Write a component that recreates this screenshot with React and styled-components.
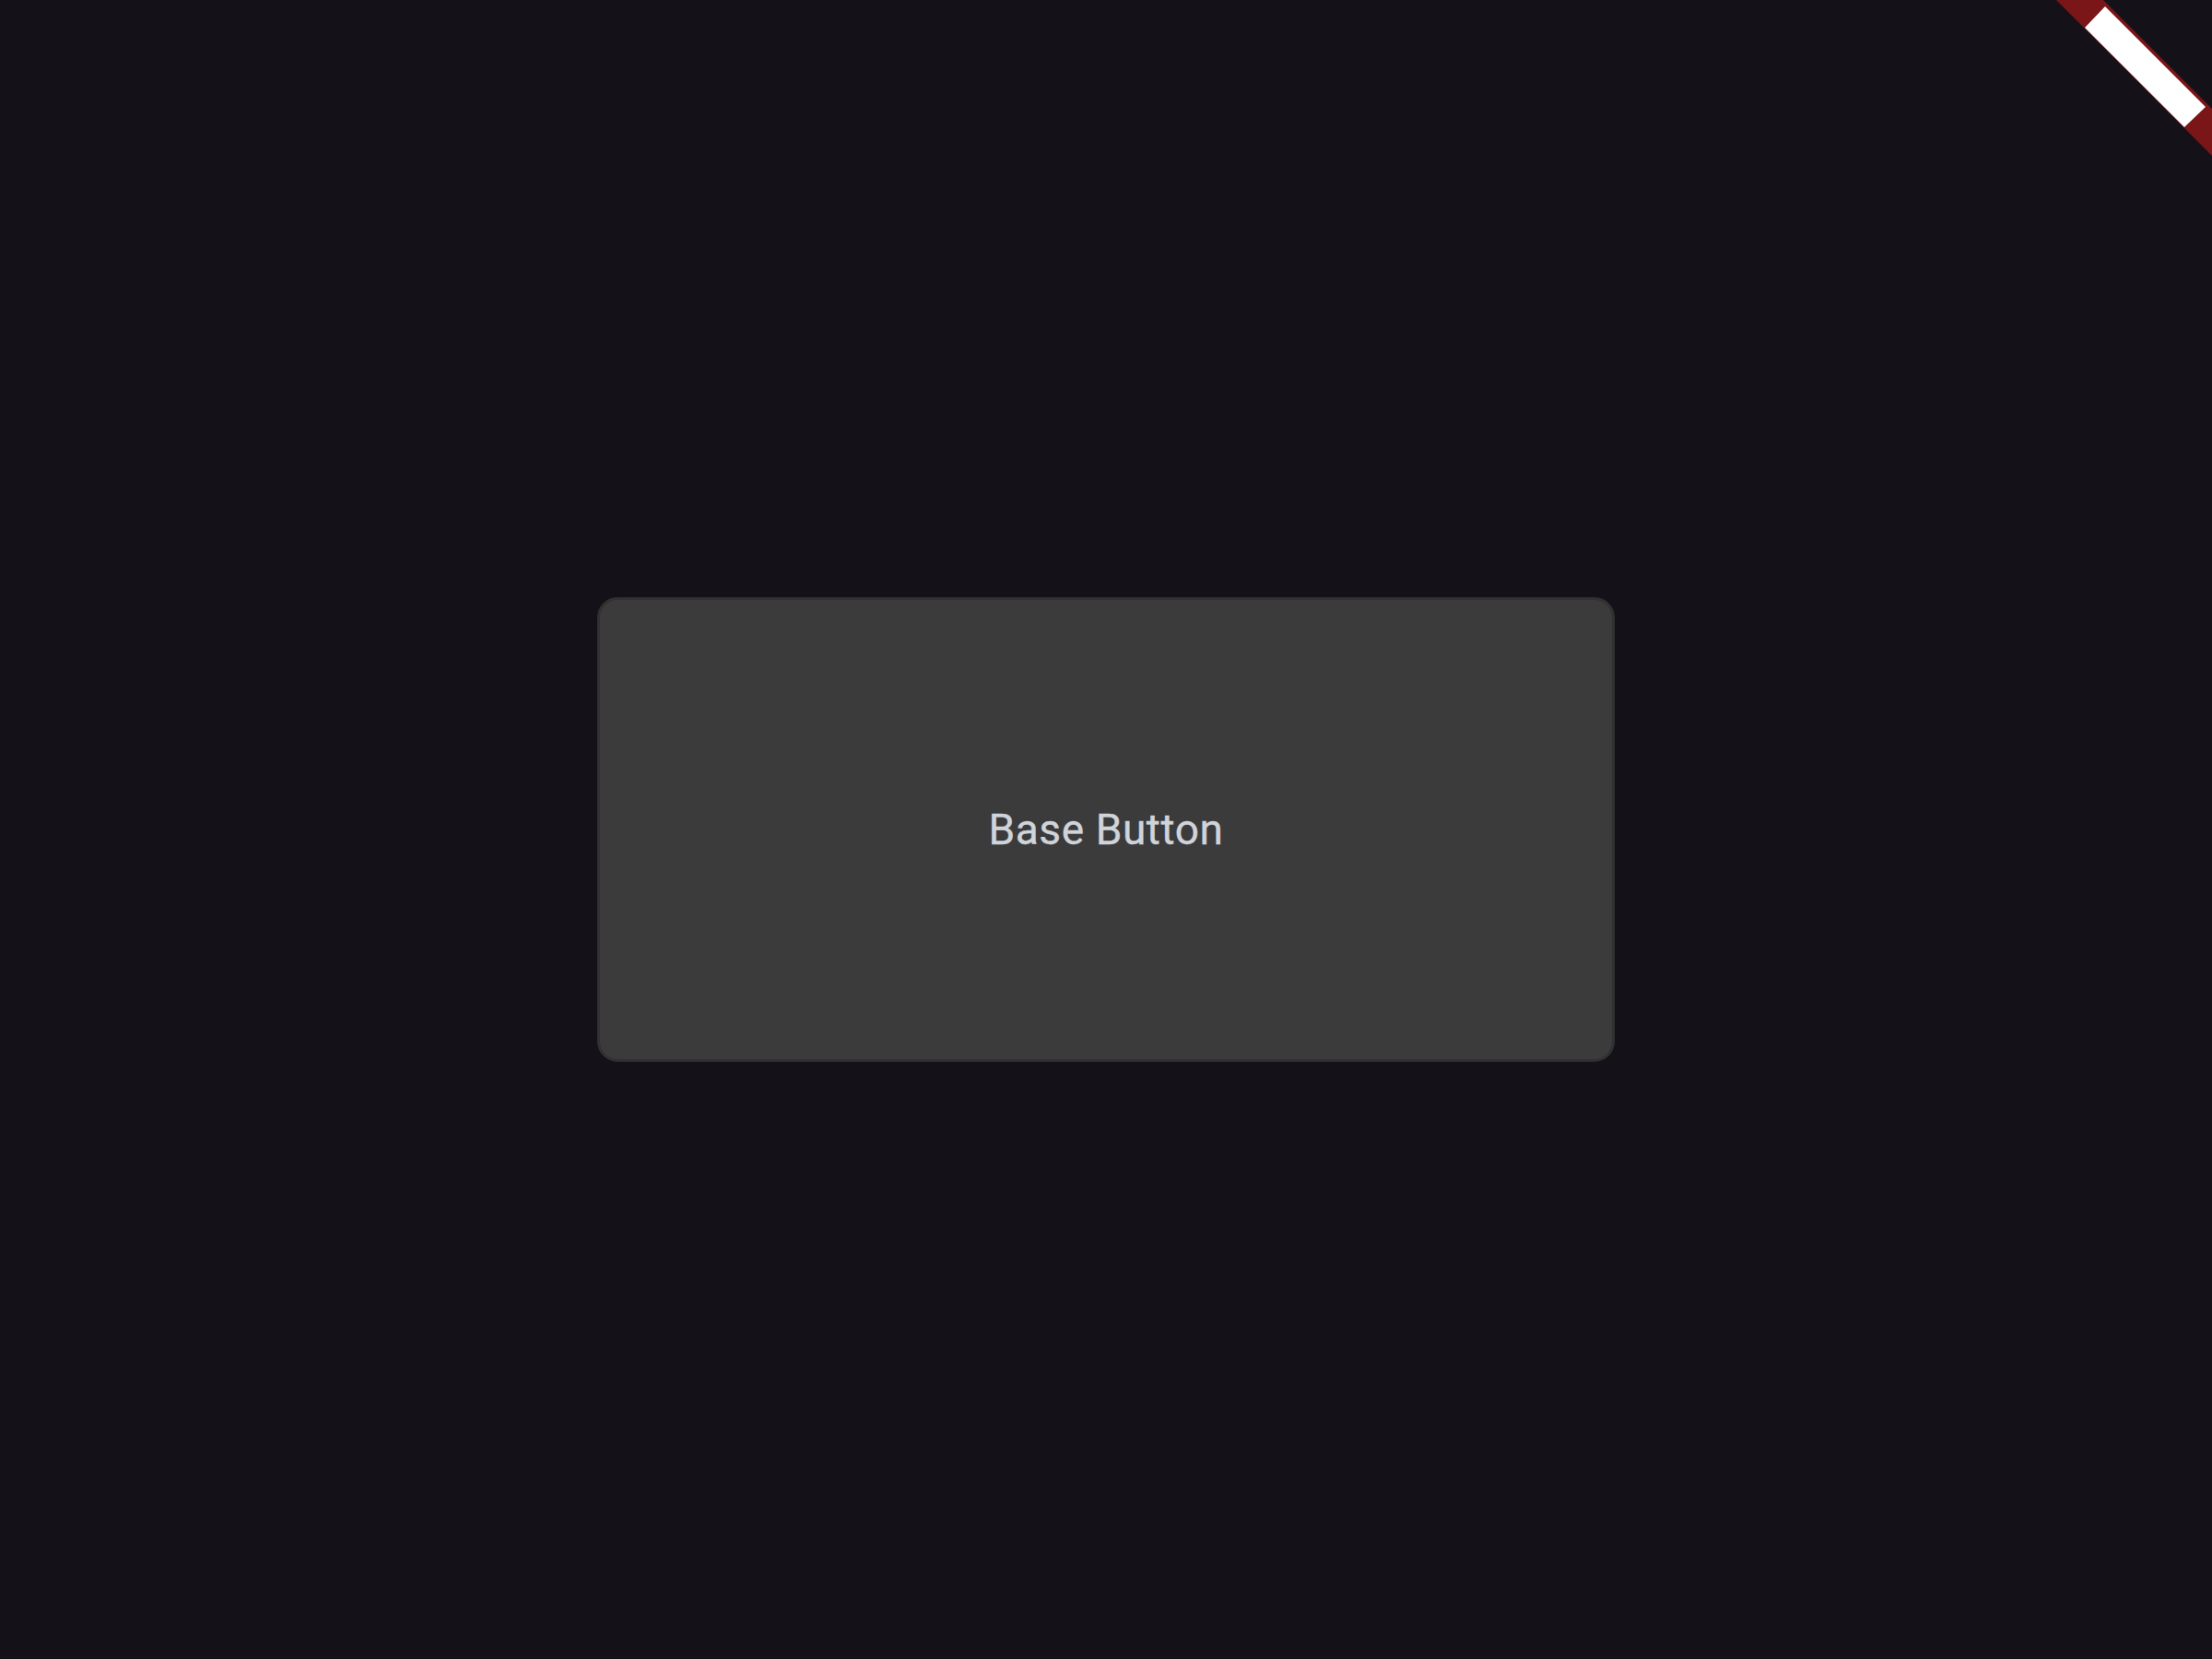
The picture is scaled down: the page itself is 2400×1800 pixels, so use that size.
import React from "react";
import styled, { createGlobalStyle } from "styled-components";

const GlobalStyle = createGlobalStyle`
  html, body {
    margin: 0;
    padding: 0;
    background: #141218;
  }
  #root {
    min-height: 100vh;
  }
`;

const Screen = styled.div`
  position: relative;
  width: 100%;
  height: 100vh;
  display: flex;
  align-items: center;
  justify-content: center;
  background: #141218;
  overflow: hidden;
`;

const BaseButton = styled.button`
  width: 1104px;
  height: 504px;
  box-sizing: border-box;
  background: #3b3b3b;
  border: 3px solid #313131;
  border-radius: 22px;
  color: #cfd3da;
  font-family: Roboto, "Noto Sans", sans-serif;
  font-size: 46px;
  font-weight: 400;
  letter-spacing: 0.6px;
  -webkit-text-stroke: 0.4px #cfd3da;
  cursor: pointer;
  padding: 0;
`;

const Ribbon = styled.svg`
  position: absolute;
  top: 0;
  right: 0;
  width: 170px;
  height: 170px;
`;

// debug banner in the top right corner
const CornerRibbon = () => (
  <Ribbon viewBox="2230 0 170 170">
    <polygon points="2231,0 2282,0 2400,118 2400,169" fill="#7a1518" />
    <polygon points="2262,30 2284,7 2393,116 2370,138" fill="#ffffff" />
  </Ribbon>
);

const App = () => {
  return (
    <>
      <GlobalStyle />
      <Screen>
        <BaseButton>Base Button</BaseButton>
        <CornerRibbon />
      </Screen>
    </>
  );
};

export default App;
